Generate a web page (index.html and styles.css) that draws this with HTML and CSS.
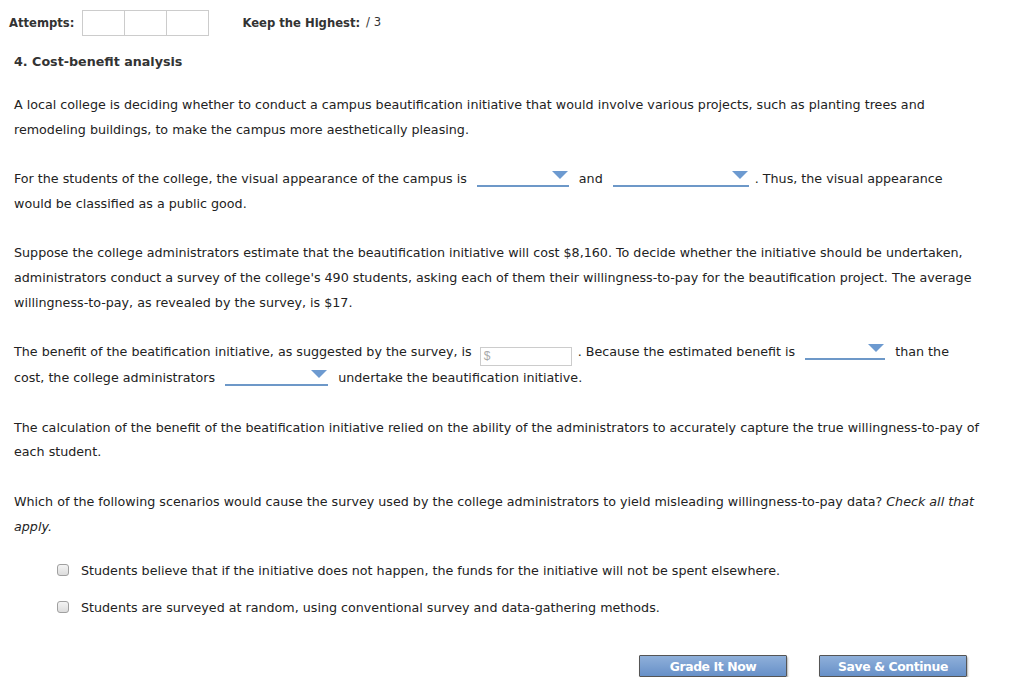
FILE: index.html
```html
<!DOCTYPE html>
<html>
<head>
<meta charset="utf-8">
<link rel="stylesheet" href="styles.css">
</head>
<body>
<div class="page">
  <div class="topbar">
    <span class="lbl">Attempts:</span>
    <div class="attempts"><span class="box"></span><span class="box"></span><span class="box"></span></div>
    <span class="lbl keep">Keep the Highest:</span>
    <span class="score">/ 3</span>
  </div>
  <h2 class="title">4. Cost-benefit analysis</h2>

  <p>A local college is deciding whether to conduct a campus beautification initiative that would involve various projects, such as planting trees and remodeling buildings, to make the campus more aesthetically pleasing.</p>

  <p>For the students of the college, the visual appearance of the campus is <span class="dd w92"></span> and <span class="dd w136"></span>. Thus, the visual appearance would be classified as a public good.</p>

  <p>Suppose the college administrators estimate that the beautification initiative will cost $8,160. To decide whether the initiative should be undertaken, administrators conduct a survey of the college's 490 students, asking each of them their willingness-to-pay for the beautification project. The average willingness-to-pay, as revealed by the survey, is $17.</p>

  <p>The benefit of the beatification initiative, as suggested by the survey, is <span class="inp">$</span>. Because the estimated benefit is <span class="dd w80"></span> than the cost, the college administrators <span class="dd w103"></span> undertake the beautification initiative.</p>

  <p>The calculation of the benefit of the beatification initiative relied on the ability of the administrators to accurately capture the true willingness-to-pay of each student.</p>

  <p>Which of the following scenarios would cause the survey used by the college administrators to yield misleading willingness-to-pay data? <em>Check all that apply.</em></p>

  <ul class="choices">
    <li><span class="cb"></span>Students believe that if the initiative does not happen, the funds for the initiative will not be spent elsewhere.</li>
    <li><span class="cb"></span>Students are surveyed at random, using conventional survey and data-gathering methods.</li>
  </ul>

  <div class="buttons">
    <button class="btn grade">Grade It Now</button>
    <button class="btn save">Save &amp; Continue</button>
  </div>
</div>
</body>
</html>
```

FILE: styles.css
```css
html, body {
  margin: 0;
  padding: 0;
  background: #fff;
}
body {
  font-family: "DejaVu Sans", Verdana, sans-serif;
  font-size: 12.7px;
  color: #222;
}
.page {
  padding: 10px 14px 0 14px;
  width: 968px;
}
.topbar {
  display: flex;
  align-items: center;
  height: 26px;
  margin-left: -5px;
}
.lbl {
  font-weight: bold;
  font-size: 11.6px;
  color: #333;
}
.attempts {
  display: flex;
  margin-left: 8px;
  border: 1px solid #ccc;
  height: 24px;
}
.box {
  width: 41px;
  height: 24px;
  border-right: 1px solid #ccc;
}
.box:last-child { border-right: none; }
.keep { margin-left: 33px; }
.score {
  margin-left: 6px;
  font-size: 11.6px;
  color: #333;
  position: relative;
  top: -1px;
}
.title {
  font-size: 12.7px;
  font-weight: bold;
  margin: 18px 0 24px 0;
  color: #333;
}
p {
  margin: 0 0 25px 0;
  line-height: 24.6px;
}
.dd {
  display: inline-block;
  position: relative;
  height: 14px;
  margin: 0 6px;
  border-bottom: 2px solid #6d98c8;
  vertical-align: -4px;
}
.dd::after {
  content: "";
  position: absolute;
  right: 1px;
  top: 0px;
  border-left: 8px solid transparent;
  border-right: 8px solid transparent;
  border-top: 8px solid #6d9ad0;
}
.w92 { width: 92px; }
.w136 { width: 136px; }
.w80 { width: 80px; }
.w103 { width: 103px; }
.inp {
  display: inline-block;
  box-sizing: border-box;
  width: 92px;
  height: 19px;
  border: 1px solid #ccc;
  font-family: "Liberation Sans", Arial, sans-serif;
  font-size: 12px;
  color: #aaa;
  padding-left: 3px;
  line-height: 17px;
  vertical-align: -4px;
  margin: 0 6px 0 4px;
}
.choices {
  list-style: none;
  margin: -4px 0 0 0;
  padding: 0 0 0 43px;
}
.choices li {
  display: flex;
  align-items: center;
  height: 20px;
  margin-bottom: 17px;
}
.cb {
  box-sizing: border-box;
  width: 12px;
  height: 12px;
  border: 1px solid #a0a0a0;
  border-radius: 3px;
  background: linear-gradient(#f4f4f4, #dcdcdc);
  margin-right: 12px;
}
.buttons {
  display: flex;
  justify-content: flex-end;
  gap: 32px;
  padding-right: 15px;
  margin-top: 38px;
}
.btn {
  box-sizing: border-box;
  width: 148px;
  height: 22px;
  border: 1px solid #555;
  border-radius: 1px;
  background: linear-gradient(#8fb0da, #6790c8);
  color: #fff;
  font-family: "DejaVu Sans", Verdana, sans-serif;
  font-weight: bold;
  font-size: 12.4px;
  letter-spacing: -0.4px;
  box-shadow: 1px 2px 2px rgba(0,0,0,0.3);
  padding: 0;
}
```
